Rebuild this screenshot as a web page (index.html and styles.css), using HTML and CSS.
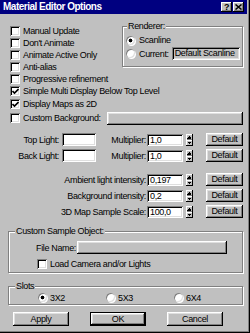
FILE: index.html
```html
<!DOCTYPE html>
<html lang="en">
<head>
    <meta charset="UTF-8">
    <meta name="viewport" content="width=device-width, initial-scale=1.0">
    <title>Material Editor Options</title>
    <link rel="stylesheet" href="styles.css">
</head>
<body>
    <div class="window">
        <div class="titlebar">
            <span class="title">Material Editor Options</span>
            <span class="tbtn help">?</span>
            <span class="tbtn close">
                <svg width="7" height="6" viewBox="0 0 7 6"><path d="M0.5 0.5 L6.5 5.5 M6.5 0.5 L0.5 5.5" stroke="#000" stroke-width="1.5"/></svg>
            </span>
        </div>

        <div class="content">
            <div class="top">
                <div class="checks">
                    <div class="check"><span class="box"></span>Manual Update</div>
                    <div class="check"><span class="box"></span>Don't Animate</div>
                    <div class="check"><span class="box"></span>Animate Active Only</div>
                    <div class="check"><span class="box"></span>Anti-alias</div>
                    <div class="check"><span class="box"></span>Progressive refinement</div>
                </div>
                <fieldset class="group renderer">
                    <legend>Renderer:</legend>
                    <div class="opt"><span class="radio on"></span>Scanline</div>
                    <div class="opt current"><span class="radio"></span>Current:<span class="field readonly">Default Scanline</span></div>
                </fieldset>
            </div>

            <div class="check"><span class="box"><svg width="7" height="7" viewBox="0 0 7 7"><path d="M0.5 3 L2.5 5 L6.5 1" fill="none" stroke="#000" stroke-width="1.6"/></svg></span>Simple Multi Display Below Top Level</div>
            <div class="check next"><span class="box"><svg width="7" height="7" viewBox="0 0 7 7"><path d="M0.5 3 L2.5 5 L6.5 1" fill="none" stroke="#000" stroke-width="1.6"/></svg></span>Display Maps as 2D</div>
            <div class="check next bg-row"><span class="box"></span>Custom Background:<span class="btn wide"></span></div>

            <div class="lrow top-light">
                <span class="llabel">Top Light:</span>
                <span class="swatch"></span>
                <span class="mlabel">Multiplier:</span>
                <span class="field num">1,0</span>
                <svg class="spin" width="7" height="12" viewBox="0 0 7 12" shape-rendering="crispEdges"><rect width="7" height="12" fill="#c0c0c0"/><path d="M0 0.5H6M0.5 0V11" stroke="#fff"/><path d="M6.5 0V12M0 11.5H7" stroke="#000"/><path d="M1 5.5H6" stroke="#808080"/><path d="M1 6.5H6" stroke="#fff"/><path d="M3.5 2L5.5 4.5H1.5Z" fill="#000"/><path d="M1.5 7.5H5.5L3.5 10Z" fill="#000"/></svg>
                <span class="btn def">Default</span>
            </div>
            <div class="lrow">
                <span class="llabel">Back Light:</span>
                <span class="swatch"></span>
                <span class="mlabel">Multiplier:</span>
                <span class="field num">1,0</span>
                <svg class="spin" width="7" height="12" viewBox="0 0 7 12" shape-rendering="crispEdges"><rect width="7" height="12" fill="#c0c0c0"/><path d="M0 0.5H6M0.5 0V11" stroke="#fff"/><path d="M6.5 0V12M0 11.5H7" stroke="#000"/><path d="M1 5.5H6" stroke="#808080"/><path d="M1 6.5H6" stroke="#fff"/><path d="M3.5 2L5.5 4.5H1.5Z" fill="#000"/><path d="M1.5 7.5H5.5L3.5 10Z" fill="#000"/></svg>
                <span class="btn def">Default</span>
            </div>

            <div class="lrow ambient">
                <span class="mlabel">Ambient light intensity:</span>
                <span class="field num">0,197</span>
                <svg class="spin" width="7" height="12" viewBox="0 0 7 12" shape-rendering="crispEdges"><rect width="7" height="12" fill="#c0c0c0"/><path d="M0 0.5H6M0.5 0V11" stroke="#fff"/><path d="M6.5 0V12M0 11.5H7" stroke="#000"/><path d="M1 5.5H6" stroke="#808080"/><path d="M1 6.5H6" stroke="#fff"/><path d="M3.5 2L5.5 4.5H1.5Z" fill="#000"/><path d="M1.5 7.5H5.5L3.5 10Z" fill="#000"/></svg>
                <span class="btn def">Default</span>
            </div>
            <div class="lrow">
                <span class="mlabel">Background intensity:</span>
                <span class="field num">0,2</span>
                <svg class="spin" width="7" height="12" viewBox="0 0 7 12" shape-rendering="crispEdges"><rect width="7" height="12" fill="#c0c0c0"/><path d="M0 0.5H6M0.5 0V11" stroke="#fff"/><path d="M6.5 0V12M0 11.5H7" stroke="#000"/><path d="M1 5.5H6" stroke="#808080"/><path d="M1 6.5H6" stroke="#fff"/><path d="M3.5 2L5.5 4.5H1.5Z" fill="#000"/><path d="M1.5 7.5H5.5L3.5 10Z" fill="#000"/></svg>
                <span class="btn def">Default</span>
            </div>
            <div class="lrow">
                <span class="mlabel">3D Map Sample Scale:</span>
                <span class="field num">100,0</span>
                <svg class="spin" width="7" height="12" viewBox="0 0 7 12" shape-rendering="crispEdges"><rect width="7" height="12" fill="#c0c0c0"/><path d="M0 0.5H6M0.5 0V11" stroke="#fff"/><path d="M6.5 0V12M0 11.5H7" stroke="#000"/><path d="M1 5.5H6" stroke="#808080"/><path d="M1 6.5H6" stroke="#fff"/><path d="M3.5 2L5.5 4.5H1.5Z" fill="#000"/><path d="M1.5 7.5H5.5L3.5 10Z" fill="#000"/></svg>
                <span class="btn def">Default</span>
            </div>

            <fieldset class="group sample">
                <legend>Custom Sample Object:</legend>
                <div class="file-row"><span>File Name:</span><span class="btn file"></span></div>
                <div class="check cam"><span class="box"></span>Load Camera and/or Lights</div>
            </fieldset>

            <fieldset class="group slots">
                <legend>Slots</legend>
                <div class="slot-row">
                    <div class="opt slot"><span class="radio on"></span>3X2</div>
                    <div class="opt slot"><span class="radio"></span>5X3</div>
                    <div class="opt slot"><span class="radio"></span>6X4</div>
                </div>
            </fieldset>

            <div class="actions">
                <span class="btn action">Apply</span>
                <span class="btn action default">OK</span>
                <span class="btn action">Cancel</span>
            </div>
        </div>
    </div>
</body>
</html>
```

FILE: styles.css
```css
/* General Styles */
* {
    margin: 0;
    padding: 0;
    box-sizing: border-box;
}

body {
    width: 250px;
    height: 333px;
    overflow: hidden;
    background-color: #c0c0c0;
    color: #000;
    font-family: "Liberation Sans", Arial, sans-serif;
    font-size: 9px;
    letter-spacing: -0.35px;
}

.window {
    width: 250px;
    height: 333px;
    padding-right: 2px;
    background-color: #c0c0c0;
    border-right: 1px solid #000;
    border-bottom: 1px solid #000;
    box-shadow: inset -1px -1px #808080;
}

/* Title bar */
.titlebar {
    display: flex;
    align-items: center;
    height: 14px;
    padding-right: 3px;
    background-color: #000080;
}

.title {
    flex: 1;
    padding-left: 3px;
    color: #fff;
    font-size: 10px;
    font-weight: bold;
    letter-spacing: -0.5px;
    line-height: 14px;
}

.tbtn {
    display: flex;
    align-items: center;
    justify-content: center;
    width: 11px;
    height: 10px;
    background-color: #c0c0c0;
    box-shadow: inset -1px -1px #000, inset 1px 1px #fff, inset -2px -2px #808080;
    font-size: 9px;
    font-weight: bold;
    line-height: 10px;
}

.close {
    margin-left: 1px;
}

/* Content */
.content {
    padding: 7px 4px 0 8px;
}

.top {
    display: flex;
    align-items: flex-start;
}

.checks {
    margin-top: 4px;
}

.check {
    display: flex;
    align-items: center;
    height: 12px;
    padding-left: 2px;
    white-space: nowrap;
}

.check.next {
    margin-top: 1px;
}

.box {
    display: flex;
    align-items: center;
    justify-content: center;
    flex: none;
    width: 10px;
    height: 10px;
    margin-right: 3px;
    background-color: #fff;
    box-shadow: inset 1px 1px #808080, inset -1px -1px #fff, inset 2px 2px #000, inset -2px -2px #dfdfdf;
}

.bg-row {
    height: 14px;
}

.btn {
    display: block;
    background-color: #c0c0c0;
    box-shadow: inset -1px -1px #000, inset 1px 1px #fff, inset -2px -2px #808080, inset 2px 2px #dfdfdf;
    text-align: center;
    white-space: nowrap;
}

.wide {
    width: 136px;
    height: 13px;
    margin-left: auto;
}

/* Group boxes */
.group {
    margin: 0;
    padding: 0;
    min-width: 0;
    border: 1px solid #808080;
    box-shadow: inset 1px 1px #fff, 1px 1px #fff;
}

.group legend {
    padding: 0 1px;
    margin-left: 6px;
    line-height: 11px;
    background-color: #c0c0c0;
}

.renderer {
    width: 121px;
    margin-left: auto;
    padding: 2px 2px 6px 0;
}

.renderer legend {
    margin-left: 4px;
}

.opt {
    display: flex;
    align-items: center;
    height: 12px;
    white-space: nowrap;
}

.renderer .opt {
    margin-left: 3px;
}

.opt.current {
    height: 13px;
    margin-top: 1px;
}

.radio {
    flex: none;
    width: 9px;
    height: 9px;
    margin-right: 4px;
    border-radius: 50%;
    background: #fff;
    box-shadow: inset 1px 1px #808080, inset -1px -1px #dfdfdf, 1px 1px #fff;
}

.radio.on {
    background: radial-gradient(circle, #000 0 1.6px, #fff 2.2px);
}

.field {
    display: block;
    height: 12px;
    padding-left: 3px;
    background-color: #fff;
    box-shadow: inset 1px 1px #808080, inset -1px -1px #fff, inset 2px 2px #000, inset -2px -2px #dfdfdf;
    line-height: 12px;
    white-space: nowrap;
}

.field.readonly {
    flex: 1;
    height: 13px;
    margin-left: 3px;
    background-color: #c0c0c0;
    line-height: 13px;
}

/* Light and intensity rows */
.lrow {
    display: flex;
    align-items: center;
    height: 13px;
    margin-top: 3px;
    white-space: nowrap;
}

.lrow.top-light {
    margin-top: 8px;
}

.lrow.ambient {
    margin-top: 11px;
}

.llabel {
    width: 51px;
    text-align: right;
}

.swatch {
    width: 34px;
    height: 13px;
    margin-left: 3px;
    background-color: #fff;
    box-shadow: inset 1px 1px #808080, inset -1px -1px #fff, inset 2px 2px #000, inset -2px -2px #dfdfdf;
}

.mlabel {
    margin-left: auto;
}

.num {
    width: 36px;
    margin-left: 1px;
}

.spin {
    display: block;
    flex: none;
    margin-left: 3px;
}

.def {
    width: 37px;
    height: 13px;
    margin-left: 13px;
    line-height: 13px;
}

/* Custom sample object */
.sample {
    margin-top: 8px;
    padding: 4px 0 2px 0;
}

.file-row {
    display: flex;
    align-items: center;
    height: 13px;
    margin-left: 27px;
}

.file {
    width: 150px;
    height: 13px;
    margin-left: 1px;
}

.cam {
    margin-top: 4px;
    margin-left: 26px;
}

/* Slots */
.slots {
    margin-top: 8px;
    padding: 0 0 1px 0;
}

.slot-row {
    display: flex;
    height: 11px;
    padding-left: 29px;
}

.slot {
    width: 72px;
    height: 11px;
}

.slot .radio {
    margin-right: 3px;
}

/* Bottom buttons */
.actions {
    display: flex;
    gap: 21px;
    margin-top: 7px;
    padding-left: 5px;
}

.action {
    width: 56px;
    height: 14px;
    line-height: 14px;
}

.action.default {
    border: 1px solid #000;
    line-height: 12px;
}
```
